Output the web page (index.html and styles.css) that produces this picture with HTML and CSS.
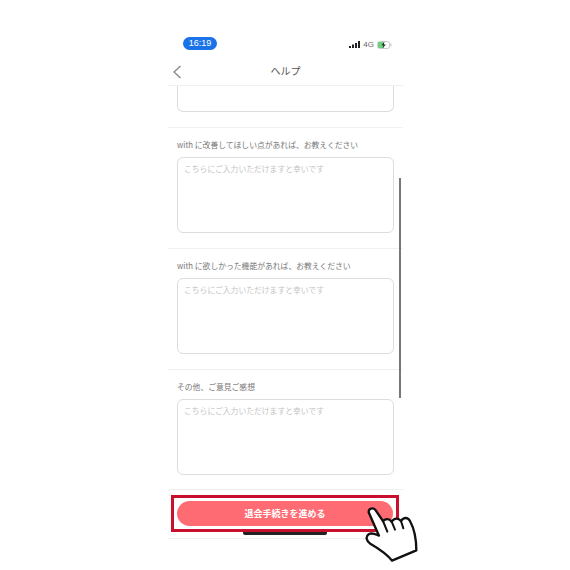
FILE: index.html
```html
<!DOCTYPE html>
<html lang="ja">
<head>
  <meta charset="UTF-8">
  <title>ヘルプ</title>
  <link rel="stylesheet" href="styles.css">
</head>
<body>

<div class="phone">
  <!-- STATUS BAR -->
  <div class="status">
    <span class="time">16:19</span>
    <div class="status-icons">
      <svg class="signal" width="11" height="7" viewBox="0 0 11 7">
        <rect x="0" y="5" width="2" height="2"/>
        <rect x="3" y="3.5" width="2" height="3.5"/>
        <rect x="6" y="2" width="2" height="5"/>
        <rect x="9" y="0" width="2" height="7"/>
      </svg>
      <span class="net">4G</span>
      <svg class="battery" width="15" height="8" viewBox="0 0 15 8">
        <rect x="0.5" y="0.5" width="12" height="7" rx="2" fill="#fff" stroke="#ccc"/>
        <rect x="1" y="1" width="6" height="6" rx="1" fill="#6fd07f"/>
        <rect x="13.2" y="2.5" width="1.3" height="3" fill="#ccc"/>
        <path d="M7.5 0.5 L4.5 4.3 H6.5 L5.5 7.5 L8.8 3.5 H6.8 Z" fill="#222"/>
      </svg>
    </div>
  </div>

  <!-- NAV -->
  <header class="nav">
    <svg class="back" width="10" height="14" viewBox="0 0 10 14">
      <path d="M8.5 1 L2 7 L8.5 13" fill="none" stroke="#8a8a8a" stroke-width="1.4"/>
    </svg>
    <h1>ヘルプ</h1>
  </header>

  <!-- FORM -->
  <main class="form">
    <section class="field first">
      <div class="box box-cut"></div>
    </section>
    <section class="field">
      <p class="label">with に改善してほしい点があれば、お教えください</p>
      <div class="box">こちらにご入力いただけますと幸いです</div>
    </section>
    <section class="field">
      <p class="label">with に欲しかった機能があれば、お教えください</p>
      <div class="box">こちらにご入力いただけますと幸いです</div>
    </section>
    <section class="field last">
      <p class="label">その他、ご意見ご感想</p>
      <div class="box">こちらにご入力いただけますと幸いです</div>
    </section>
  </main>

  <div class="action">
    <div class="highlight">
      <button class="submit">退会手続きを進める</button>
    </div>
  </div>
  <div class="home-bar"></div>
  <div class="bottom-line"></div>
  <div class="scrollbar"></div>
</div>

<svg class="hand" width="70" height="70" viewBox="0 0 210 210">
  <path d="M41 52 C40 40 54 36 62 46 L84 78 C92 70 102 70 110 80 C118 68 130 68 138 78 C146 66 158 66 165 78 C177 100 184 130 184 166 L111 197 C95 175 70 160 46 146 C34 138 30 125 42 117 C52 112 62 118 72 122 Z" fill="#fff" stroke="#111" stroke-width="7" stroke-linejoin="round"/>
  <path d="M84 78 L97 110 M110 80 L120 104 M138 78 L145 100" fill="none" stroke="#111" stroke-width="6" stroke-linecap="round"/>
</svg>

</body>
</html>
```

FILE: styles.css
```css
body {
  margin: 0;
  background: #fff;
  font-family: "Noto Sans CJK JP", "Liberation Sans", sans-serif;
}

.phone {
  position: relative;
  width: 235px;
  height: 570px;
  margin-left: 168px;
}

.status {
  display: flex;
  justify-content: space-between;
  align-items: center;
  height: 22px;
  padding: 32px 11px 2px 15px;
}

.time {
  width: 34px;
  height: 13px;
  line-height: 13px;
  background: #1a73e8;
  color: #fff;
  border-radius: 7px;
  font-size: 9px;
  text-align: center;
  font-family: "Liberation Sans", sans-serif;
}

.status-icons {
  display: flex;
  align-items: center;
  gap: 3px;
  margin-top: 3px;
}

.signal { fill: #222; }

.net {
  font-size: 8px;
  color: #666;
  font-family: "Liberation Sans", sans-serif;
}

.nav {
  position: relative;
  height: 29px;
  border-bottom: 1px solid #f0f0f0;
}

.nav h1 {
  margin: 0;
  font-size: 10px;
  font-weight: 400;
  line-height: 30px;
  color: #555;
  text-align: center;
}

.back {
  position: absolute;
  left: 4px;
  top: 9px;
}

.field {
  padding: 11px 9px 15px;
  border-bottom: 1px solid #f0f0f0;
}

.field.first {
  padding-top: 0;
}

.field.last {
  padding-bottom: 14px;
}

.label {
  margin: 0 0 6px;
  font-size: 7.8px;
  line-height: 12px;
  color: #777;
}

.box {
  box-sizing: border-box;
  height: 76px;
  padding: 5px 6px;
  border: 1px solid #ddd;
  border-radius: 6px;
  font-size: 7.8px;
  line-height: 12px;
  color: #c4c4c4;
}

.box-cut {
  height: 26px;
  border-top: none;
  border-radius: 0 0 6px 6px;
}

.action {
  padding-top: 5px;
}

.highlight {
  box-sizing: border-box;
  width: 228px;
  margin-left: 3px;
  padding: 3px;
  border: 3px solid #c8102e;
}

.submit {
  display: block;
  width: 216px;
  height: 25px;
  padding: 0;
  background: #ff6b73;
  color: #fff;
  border: none;
  border-radius: 13px;
  font-family: inherit;
  font-size: 9px;
  font-weight: 700;
}

.home-bar {
  width: 84px;
  height: 3px;
  margin-left: 75px;
  background: #222;
  border-radius: 0 0 2px 2px;
}

.bottom-line {
  margin-top: 3px;
  border-top: 1px solid #f0f0f0;
}

.scrollbar {
  position: absolute;
  left: 231px;
  top: 178px;
  width: 2px;
  height: 220px;
  background: #777;
}

.hand {
  position: absolute;
  left: 355px;
  top: 495px;
}
```
